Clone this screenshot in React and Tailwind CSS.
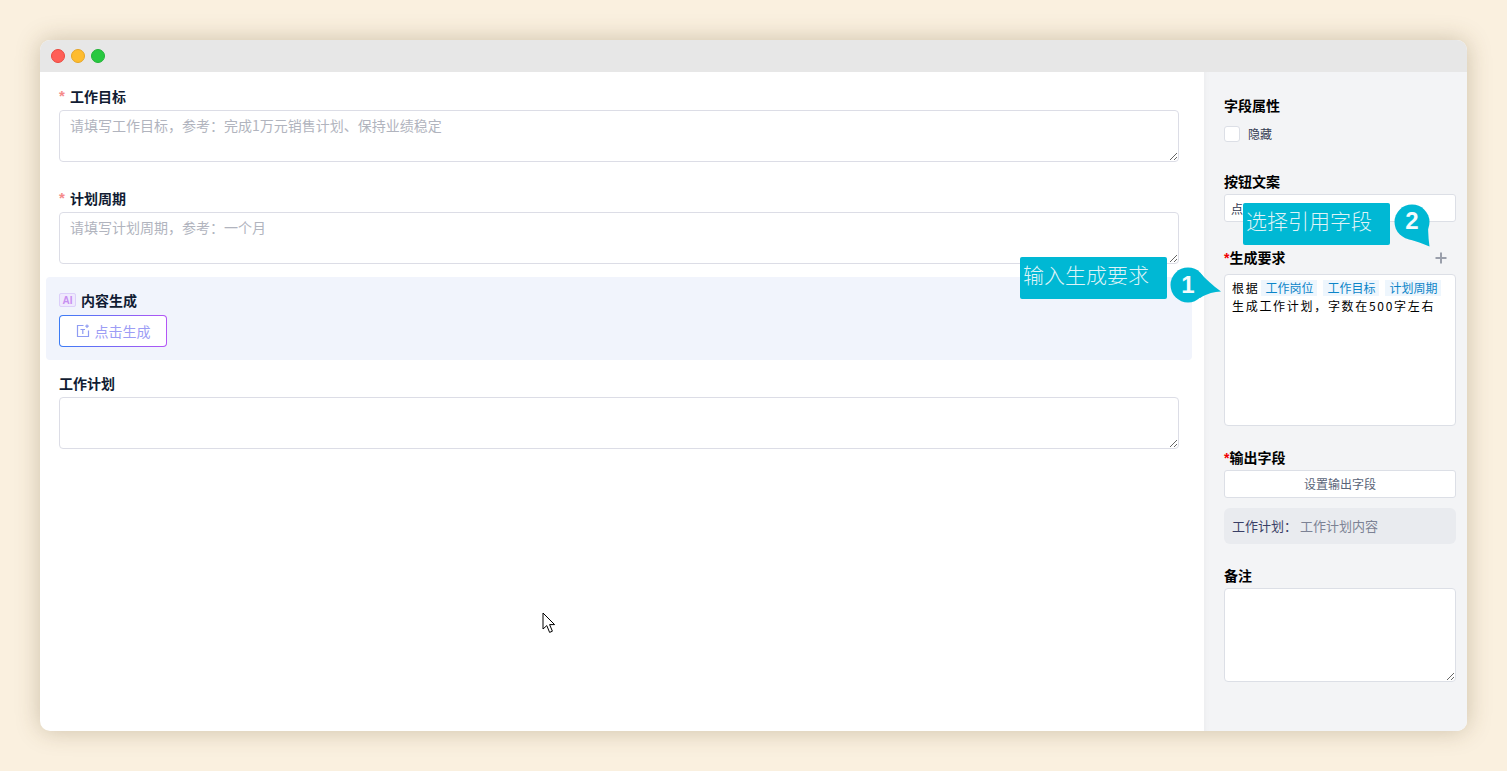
const FONT = "font-['Noto_Sans_CJK_SC','Noto_Sans',sans-serif]";
const COMMA = "\uFF0C";
const COLON = "\uFF1A";

function Field({ label, required, placeholder, className = "" }) {
  return (
    <div className={className}>
      <div className="flex items-center h-5 -translate-y-px text-[14px] font-semibold text-[#111c33] leading-5">
        {required && <span className="font-['Liberation_Sans',sans-serif] text-[15px] text-[#f58a8a] font-bold w-[11px]">*</span>}
        {label}
      </div>
      <textarea
        placeholder={placeholder}
        className="block mt-[3px] w-[1120px] h-[52px] rounded border border-[#dcdde6] bg-white px-[10px] pt-[3px] text-[14px] leading-[22px] outline-none placeholder:text-[#b1b4be] resize-y"
      />
    </div>
  );
}

function PanelLabel({ children, required, className = "" }) {
  return (
    <div className={`h-5 leading-5 text-[14px] font-semibold text-black ${className}`}>
      <div className="-translate-y-px">
        {required && <span className="font-['Liberation_Sans',sans-serif] font-bold text-[#f00000]">*</span>}
        {children}
      </div>
    </div>
  );
}

function Tag({ children }) {
  return <span className="inline-block bg-[#eef6fd] text-[#0b84c8] px-[4px] h-4 leading-4 text-[12px] tracking-normal">{children}</span>;
}

function Bubble({ n, tail, shift = "" }) {
  return (
    <div className="relative w-[36px] h-[36px]">
      <svg className="absolute left-0 top-0 overflow-visible" width="36" height="36" viewBox="0 0 36 36">
        <circle cx="18" cy="18" r="17.5" fill="#00b8d4" />
        <path d={tail} fill="#00b8d4" />
      </svg>
      <span className={`absolute inset-0 flex items-center justify-center font-['Liberation_Sans',sans-serif] font-bold text-[24px] text-[#f4fbfd] ${shift}`}>{n}</span>
    </div>
  );
}

export default function App() {
  return (
    <div className={`h-screen overflow-hidden bg-[#faf0df] pt-10 px-10 ${FONT}`}>
      <div className="relative w-[1427px] h-[691px] rounded-[10px] overflow-hidden shadow-[0_0_24px_rgba(90,70,30,0.28)] bg-white flex flex-col">
        <div className="h-8 shrink-0 bg-[#e7e7e7] flex items-center pl-[11px] gap-[6px]">
          <span className="w-[14px] h-[14px] rounded-full bg-[#ff5f57] border border-[#e9483f]" />
          <span className="w-[14px] h-[14px] rounded-full bg-[#febc2e] border border-[#e5a526]" />
          <span className="w-[14px] h-[14px] rounded-full bg-[#28c840] border border-[#22b238]" />
        </div>
        <div className="flex flex-1 min-h-0">
          <div className="relative w-[1164px] pl-[19px] pt-[15px]">
            <Field label="工作目标" required placeholder={`请填写工作目标${COMMA}参考${COLON}完成1万元销售计划、保持业绩稳定`} />
            <Field className="mt-[27px]" label="计划周期" required placeholder={`请填写计划周期${COMMA}参考${COLON}一个月`} />
            <div className="mt-[13px] -ml-[13px] w-[1146px] h-[83px] rounded bg-[#f1f4fc] pl-[13px] pt-[14px]">
              <div className="flex items-center h-5 -translate-y-px text-[14px] font-semibold text-[#111c33]">
                <span className="w-[17px] h-[14px] flex items-center justify-center rounded-[2px] border border-[#dccffa] bg-[#efe9fd] text-[#c78ff0] text-[10px] font-bold font-['Liberation_Sans',sans-serif] mr-[5px]">AI</span>
                内容生成
              </div>
              <button className="mt-[4px] w-[108px] h-8 flex items-center justify-center gap-[5px] rounded border border-transparent [background:linear-gradient(white,white)_padding-box,linear-gradient(90deg,#3b7cf6,#b455f5)_border-box] text-[14px] text-[#9c9df5]">
                <svg width="14" height="14" viewBox="0 0 14 14" fill="none" stroke="#8f9cf3" strokeWidth="1.2">
                  <path d="M7.5 1.5H1.5V12.5H12.5V6.5" />
                  <path d="M4.5 5.5H9M6.8 5.5V10" />
                  <path d="M11 0.5V4M9.3 2.2H12.8" />
                </svg>
                点击生成
              </button>
            </div>
            <Field className="mt-[14px]" label="工作计划" />
            <svg className="absolute left-[502px] top-[540px]" width="14" height="22" viewBox="0 0 14 22">
              <path d="M1 1V17L4.8 13.6L7.6 20.4L10.4 19.2L7.6 12.6H12.6Z" fill="white" stroke="black" strokeWidth="1" />
            </svg>
          </div>
          <div className="relative w-[263px] bg-[#f3f4f6] shadow-[inset_6px_0_6px_-6px_rgba(0,0,0,0.05)] pl-5 pr-[11px] pt-6">
            <PanelLabel>字段属性</PanelLabel>
            <label className="mt-[10px] flex items-center h-4 text-[12px] text-[#333c52]">
              <span className="w-4 h-4 rounded-[3px] border border-[#dcdfe6] bg-white mr-2" />
              隐藏
            </label>
            <PanelLabel className="mt-[30px]">按钮文案</PanelLabel>
            <div className="mt-[2px] h-7 rounded-[3px] border border-[#dcdfe6] bg-white px-[6px] leading-[28px] text-[12px] text-[#333c52]">点击生成</div>
            <div className="mt-[26px] flex items-center justify-between">
              <PanelLabel required>生成要求</PanelLabel>
              <svg className="mr-[8px]" width="14" height="14" viewBox="0 0 14 14" stroke="#9a9fab" strokeWidth="2">
                <path d="M7 1.5V12.5M1.5 7H12.5" />
              </svg>
            </div>
            <div className="mt-[6px] h-[152px] rounded border border-[#dcdfe6] bg-white pl-[7px] pt-[4px] text-[12px] leading-[18px] text-black tracking-[1.7px]">
              <div className="flex items-center gap-[6px] h-[18px]">
                <span className="mr-[-4px]">根据</span>
                <Tag>工作岗位</Tag><Tag>工作目标</Tag><Tag>计划周期</Tag>
              </div>
              <div className="whitespace-nowrap">{`生成工作计划${COMMA}字数在500字左右`}</div>
            </div>
            <PanelLabel required className="mt-[22px]">输出字段</PanelLabel>
            <button className="mt-[2px] block w-full h-7 rounded-[3px] border border-[#dcdfe6] bg-white text-[12px] text-[#5a6478]">设置输出字段</button>
            <div className="mt-[10px] h-9 rounded-md bg-[#e9ebef] flex items-center px-[8px] text-[13px]">
              <span className="text-[#3a3f66] font-normal w-[68px]">{`工作计划${COLON}`}</span>
              <span className="text-[#7c8294]">工作计划内容</span>
            </div>
            <PanelLabel className="mt-[22px]">备注</PanelLabel>
            <textarea className="block mt-[2px] w-full h-[94px] rounded border border-[#dcdfe6] bg-white outline-none resize-y" />
          </div>
        </div>

        <div className="absolute left-[980px] top-[217px] w-[147px] h-[42px] rounded-[2px] bg-[#00b8d4] pl-[3px] pb-[8px] flex items-center text-[21px] font-light text-[#dff3f7] leading-none">输入生成要求</div>
        <div className="absolute left-[1130px] top-[227px]">
          <Bubble n="1" tail="M30 6C36 12 42 18 51 24.5C44 25 38 26 30 31Z" />
        </div>
        <div className="absolute left-[1203px] top-[163px] w-[147px] h-[42px] rounded-[2px] bg-[#00b8d4] pl-[3px] pb-[8px] flex items-center text-[21px] font-light text-[#dff3f7] leading-none">选择引用字段</div>
        <div className="absolute left-[1354px] top-[164px]">
          <Bubble n="2" tail="M34 12C34 22 34 32 35.5 42.5C29 40 22 37 14 35Z" shift="-translate-y-px" />
        </div>
      </div>
    </div>
  );
}
